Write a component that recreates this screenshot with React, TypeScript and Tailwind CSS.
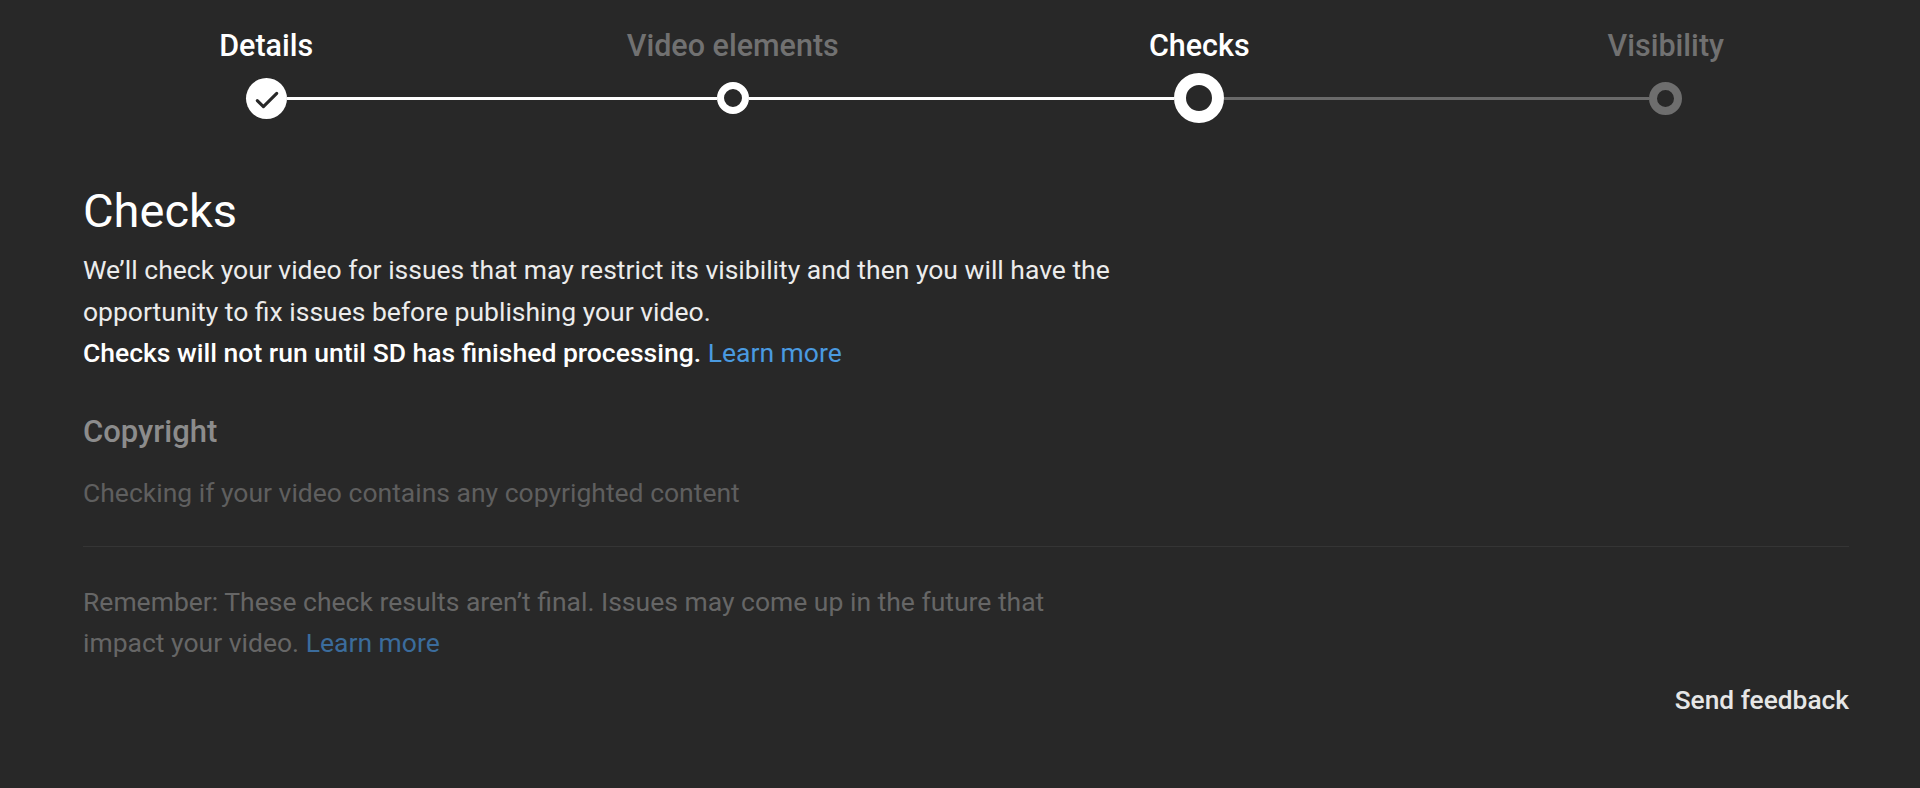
import React from 'react';

type StepState = 'done' | 'passed' | 'current' | 'todo';

const STEPS: { label: string; state: StepState }[] = [
  { label: 'Details', state: 'done' },
  { label: 'Video elements', state: 'passed' },
  { label: 'Checks', state: 'current' },
  { label: 'Visibility', state: 'todo' },
];

function StepDot({ state }: { state: StepState }) {
  if (state === 'done') {
    return (
      <div className="w-[41px] h-[41px] rounded-full bg-white flex items-center justify-center shrink-0">
        <svg width="41" height="41" viewBox="0 0 40 40" fill="none">
          <polyline points="11,22 17,28 30,15" stroke="#282828" strokeWidth="3" strokeLinecap="round" strokeLinejoin="round" />
        </svg>
      </div>
    );
  }
  if (state === 'current') {
    return <div className="w-[50px] h-[50px] rounded-full border-[12px] border-white shrink-0" />;
  }
  if (state === 'passed') {
    return <div className="w-[32px] h-[32px] rounded-full border-[7px] border-white shrink-0" />;
  }
  return <div className="w-[33px] h-[33px] rounded-full border-[8px] border-[#6e6e6e] shrink-0" />;
}

function Stepper() {
  return (
    <div className="pt-[28px] pl-[33px] w-[1899px]">
      {/* Labels */}
      <div className="grid grid-cols-4">
        {STEPS.map(({ label, state }) => (
          <div
            key={label}
            className={`text-center text-[30.5px] leading-[36px] font-medium ${
              state === 'done' || state === 'current' ? 'text-white' : 'text-[#717171]'
            }`}
          >
            {label}
          </div>
        ))}
      </div>

      {/* Dots and connectors */}
      <div className="grid grid-cols-4 mt-[6px]">
        {STEPS.map(({ label, state }, i) => {
          const leftColor =
            i === 0 ? 'bg-transparent' : state === 'todo' ? 'bg-[#6a6a6a]' : 'bg-white';
          const rightColor =
            i === STEPS.length - 1
              ? 'bg-transparent'
              : state === 'current' || state === 'todo'
                ? 'bg-[#6a6a6a]'
                : 'bg-white';
          return (
            <div key={label} className="h-[56px] flex items-center">
              <div className={`flex-1 h-[3px] ${leftColor}`} />
              <StepDot state={state} />
              <div className={`flex-1 h-[3px] ${rightColor}`} />
            </div>
          );
        })}
      </div>
    </div>
  );
}

export default function App() {
  return (
    <div className="w-full h-[788px] bg-[#282828] font-['Roboto',sans-serif] overflow-hidden">
      <Stepper />

      <div className="pl-[83px] pr-[71px]">
        <h1 className="mt-[57px] text-[47px] leading-[56px] font-normal text-white">Checks</h1>

        <div className="mt-[10px] text-[26.5px] leading-[41.5px] text-[#ececec]">
          <p>
            We’ll check your video for issues that may restrict its visibility and then you will have the
            <br />
            opportunity to fix issues before publishing your video.
          </p>
          <p className="font-medium text-white">
            Checks will not run until SD has finished processing.{' '}
            <a className="font-normal text-[#4a9ae0]" href="#">
              Learn more
            </a>
          </p>
        </div>

        {/* Copyright check */}
        <h2 className="mt-[40px] text-[31px] leading-[36px] font-medium text-[#8c8c8c]">Copyright</h2>
        <p className="mt-[22px] text-[26.5px] leading-[41px] text-[#5f5f5f]">
          Checking if your video contains any copyrighted content
        </p>

        <div className="mt-[33px] h-px bg-[#353535]" />

        <p className="mt-[34px] text-[26.5px] leading-[41px] text-[#666666]">
          Remember: These check results aren’t final. Issues may come up in the future that
          <br />
          impact your video.{' '}
          <a className="text-[#3b6c9c]" href="#">
            Learn more
          </a>
        </p>

        <div className="mt-[19px] flex justify-end">
          <span className="text-[26.3px] leading-[36px] font-medium text-[#e6e6e6]">Send feedback</span>
        </div>
      </div>
    </div>
  );
}
